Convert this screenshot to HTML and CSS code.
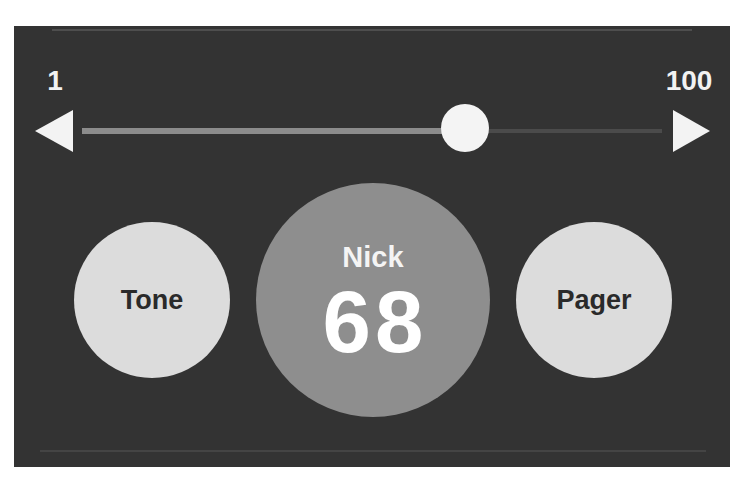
FILE: index.html
```html
<!DOCTYPE html>
<html>
<head>
<meta charset="utf-8">
<link rel="stylesheet" href="styles.css">
</head>
<body>
<div class="panel">
  <div class="rule rule-top"></div>
  <div class="slider">
    <span class="lbl lbl-min">1</span>
    <span class="lbl lbl-max">100</span>
    <svg class="arrow arrow-left" width="38" height="42" viewBox="0 0 38 42"><polygon points="38,0 38,42 0,21" fill="#f3f3f3"/></svg>
    <div class="track">
      <div class="fill" style="width:66%"></div>
      <div class="thumb" style="left:66%"></div>
    </div>
    <svg class="arrow arrow-right" width="38" height="42" viewBox="0 0 38 42"><polygon points="0,0 0,42 37,21" fill="#f3f3f3"/></svg>
  </div>
  <div class="buttons">
    <div class="circle small">Tone</div>
    <div class="circle big">
      <span class="name">Nick</span>
      <span class="value">68</span>
    </div>
    <div class="circle small">Pager</div>
  </div>
  <div class="rule rule-bottom"></div>
</div>
</body>
</html>
```

FILE: styles.css
```css
html, body {
  margin: 0;
  padding: 0;
  background: #ffffff;
}
body {
  font-family: "Liberation Sans", Arial, sans-serif;
  padding: 26px 0 0 14px;
}
.panel {
  box-sizing: border-box;
  width: 716px;
  height: 441px;
  background: #333333;
  padding-top: 3px;
  display: flex;
  flex-direction: column;
}
.rule {
  height: 2px;
}
.rule-top {
  margin-left: 38px;
  width: 640px;
  background: #4e4e4e;
}
.rule-bottom {
  margin-left: 26px;
  width: 666px;
  margin-top: 33px;
  background: #444444;
}
.slider {
  margin-top: 34px;
  padding: 0 20px 0 21px;
  display: grid;
  grid-template-columns: 38px 1fr 38px;
  grid-template-rows: 32px 42px;
  column-gap: 9px;
  row-gap: 13px;
  align-items: center;
}
.lbl {
  color: #f2f2f2;
  font-weight: bold;
  font-size: 28px;
  line-height: 32px;
  text-align: center;
  grid-row: 1;
}
.lbl-min { grid-column: 1; padding-left: 2px; }
.lbl-max { grid-column: 3; margin-left: -10px; margin-right: -6px; }
.arrow { display: block; grid-row: 2; }
.arrow-left { grid-column: 1; }
.arrow-right { grid-column: 3; margin-left: 1px; }
.track {
  grid-row: 2;
  grid-column: 2;
  position: relative;
  height: 4px;
  background: #4b4b4b;
  margin-right: 1px;
}
.fill {
  position: absolute;
  left: 0;
  top: -1px;
  height: 6px;
  background: #8c8c8c;
}
.thumb {
  position: absolute;
  top: -25px;
  width: 48px;
  height: 48px;
  margin-left: -24px;
  border-radius: 50%;
  background: #f4f4f4;
}
.buttons {
  margin-top: 31px;
  display: flex;
  justify-content: center;
  align-items: center;
  gap: 26px;
  height: 234px;
  padding-left: 2px;
}
.circle {
  border-radius: 50%;
  display: flex;
  flex-direction: column;
  align-items: center;
  justify-content: center;
  font-weight: bold;
}
.small {
  width: 156px;
  height: 156px;
  background: #dcdcdc;
  color: #2a2a2a;
  font-size: 27px;
}
.big {
  box-sizing: border-box;
  width: 234px;
  height: 234px;
  background: #8e8e8e;
  color: #ffffff;
  padding-top: 8px;
}
.name {
  font-size: 29px;
  line-height: 29px;
  color: #f4f4f4;
}
.value {
  margin-top: 7px;
  font-size: 87px;
  line-height: 86px;
  letter-spacing: 4px;
  padding-left: 4px;
}
```
